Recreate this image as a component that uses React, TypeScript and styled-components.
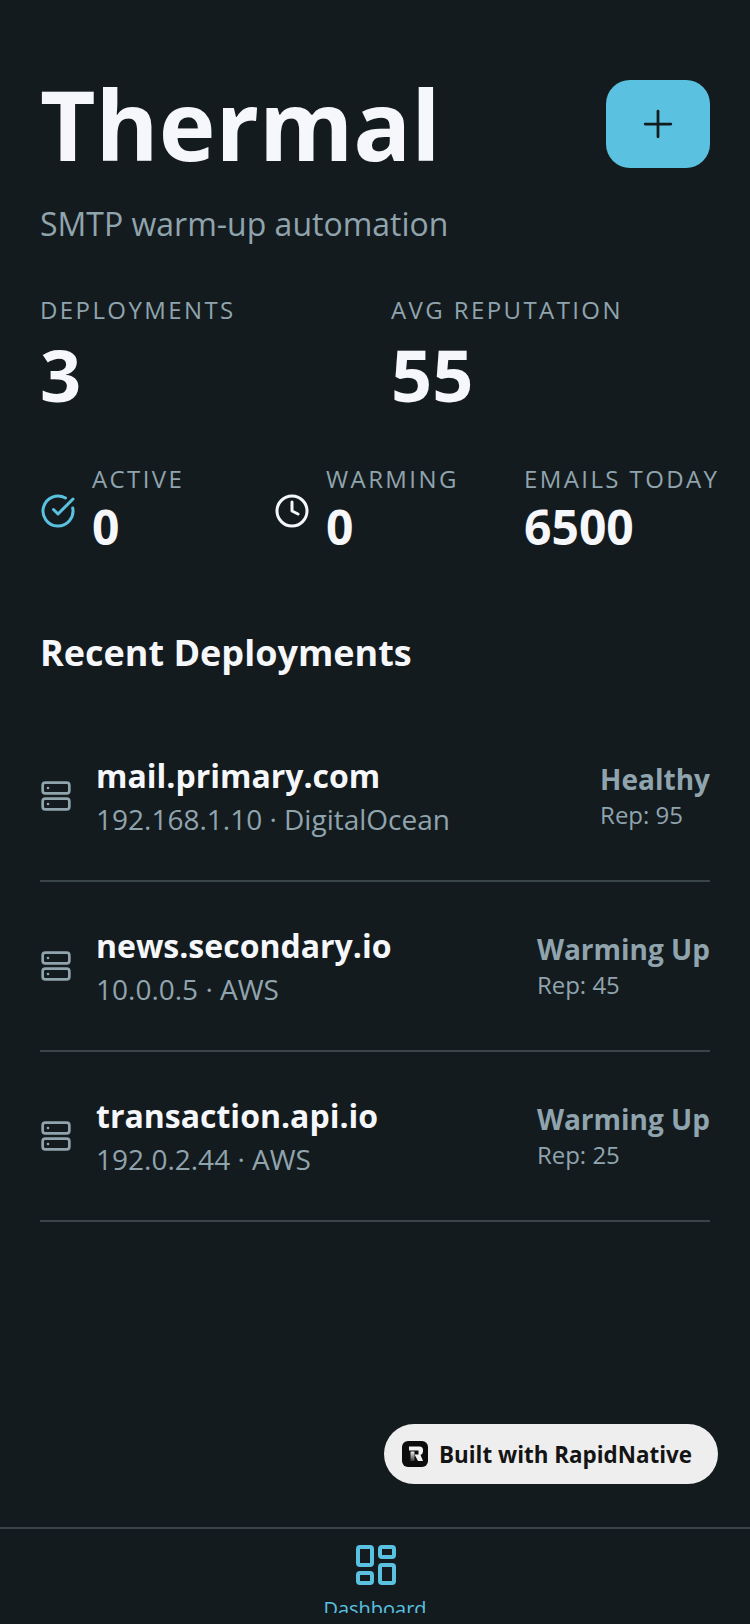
import styled, { createGlobalStyle } from 'styled-components';
import { Plus, CircleCheckBig, Clock, Server, LayoutDashboard } from 'lucide-react';

const GlobalStyle = createGlobalStyle`
  html, body {
    margin: 0;
    padding: 0;
    background: #141b1e;
  }
  * {
    box-sizing: border-box;
  }
`;

const Screen = styled.div`
  position: relative;
  width: 750px;
  height: 1624px;
  overflow: hidden;
  display: flex;
  flex-direction: column;
  background: #141b1e;
  font-family: 'Open Sans', 'Noto Sans', sans-serif;
`;

const Main = styled.main`
  flex: 1;
  padding: 80px 40px 0;
`;

const Header = styled.div`
  display: flex;
  justify-content: space-between;
  align-items: flex-start;
`;

const Title = styled.h1`
  margin: 0;
  font-size: 96px;
  line-height: 88px;
  font-weight: 700;
  color: #f5f7fa;
`;

const AddButton = styled.button`
  width: 104px;
  height: 88px;
  padding: 0;
  border: 0;
  border-radius: 24px;
  background: #5ac1e0;
  color: #141b1e;
  display: flex;
  align-items: center;
  justify-content: center;
`;

const Subtitle = styled.p`
  margin: 32px 0 0;
  font-size: 32px;
  line-height: 48px;
  color: #90a4ae;
`;

const StatsRow = styled.div`
  display: grid;
  grid-template-columns: 351px 1fr;
  margin-top: 46px;
`;

const Label = styled.div`
  font-size: 24px;
  line-height: 32px;
  letter-spacing: 2.4px;
  color: #90a4ae;
  white-space: nowrap;
`;

const BigValue = styled.div`
  margin-top: 8px;
  font-size: 72px;
  line-height: 80px;
  font-weight: 700;
  color: #f5f7fa;
`;

const MiniRow = styled.div`
  display: flex;
  margin-top: 49px;
`;

const MiniStat = styled.div<{ $width: number }>`
  flex: none;
  width: ${(p) => p.$width}px;
  display: flex;
  align-items: center;
  gap: 16px;
`;

const IconSlot = styled.div<{ $color: string }>`
  display: flex;
  margin-top: 3px;
  color: ${(p) => p.$color};
`;

const MiniValue = styled.div`
  margin-top: 4px;
  font-size: 48px;
  line-height: 56px;
  font-weight: 700;
  color: #f5f7fa;
`;

const SectionTitle = styled.h2`
  margin: 70px 0 31px;
  font-size: 36px;
  line-height: 56px;
  font-weight: 700;
  color: #f5f7fa;
`;

const Row = styled.div`
  display: flex;
  align-items: center;
  height: 170px;
  border-bottom: 2px solid #3a4549;
`;

const RowIcon = styled.div`
  width: 56px;
  display: flex;
  color: #90a4ae;
`;

const RowInfo = styled.div`
  flex: 1;
  margin-top: 3px;
`;

const RowName = styled.div`
  font-size: 32px;
  line-height: 40px;
  font-weight: 700;
  color: #f5f7fa;
`;

const RowMeta = styled.div`
  margin-top: 3px;
  font-size: 28px;
  line-height: 40px;
  color: #90a4ae;
`;

const StatusName = styled.div`
  font-size: 28px;
  line-height: 36px;
  font-weight: 700;
  color: #90a4ae;
`;

const StatusRep = styled.div`
  margin-top: 2px;
  font-size: 24px;
  line-height: 32px;
  color: #90a4ae;
`;

const Chip = styled.div`
  position: absolute;
  left: 384px;
  top: 1424px;
  width: 334px;
  height: 60px;
  padding-left: 18px;
  border-radius: 30px;
  background: #eeeeee;
  display: flex;
  align-items: center;
  gap: 11px;
  font-size: 22.4px;
  font-weight: 700;
  color: #141414;
`;

const ChipLogo = styled.svg`
  width: 26px;
  height: 26px;
`;

const Nav = styled.nav`
  height: 97px;
  border-top: 2px solid #3a4549;
  padding-top: 12px;
  display: flex;
  flex-direction: column;
  align-items: center;
`;

const NavInner = styled.div`
  height: 72px;
  overflow: hidden;
  display: flex;
  flex-direction: column;
  align-items: center;
  color: #5ac1e0;
`;

const NavIcon = styled(LayoutDashboard)`
  flex: none;
  margin-left: 2px;
`;

const NavLabel = styled.div`
  flex: none;
  margin-top: 6px;
  font-size: 20px;
  line-height: 28px;
  color: #5ac1e0;
`;

const deployments = [
  { name: 'mail.primary.com', meta: '192.168.1.10 · DigitalOcean', status: 'Healthy', rep: 95 },
  { name: 'news.secondary.io', meta: '10.0.0.5 · AWS', status: 'Warming Up', rep: 45 },
  { name: 'transaction.api.io', meta: '192.0.2.44 · AWS', status: 'Warming Up', rep: 25 },
];

function App() {
  return (
    <Screen>
      <GlobalStyle />
      <Main>
        <Header>
          <Title>Thermal</Title>
          <AddButton>
            <Plus size={44} strokeWidth={1.5} />
          </AddButton>
        </Header>
        <Subtitle>SMTP warm-up automation</Subtitle>
        <StatsRow>
          <div>
            <Label>DEPLOYMENTS</Label>
            <BigValue>3</BigValue>
          </div>
          <div>
            <Label>AVG REPUTATION</Label>
            <BigValue>55</BigValue>
          </div>
        </StatsRow>
        <MiniRow>
          <MiniStat $width={234}>
            <IconSlot $color="#5ac1e0">
              <CircleCheckBig size={36} strokeWidth={2} />
            </IconSlot>
            <div>
              <Label>ACTIVE</Label>
              <MiniValue>0</MiniValue>
            </div>
          </MiniStat>
          <MiniStat $width={250}>
            <IconSlot $color="#f5f7fa">
              <Clock size={36} strokeWidth={2} />
            </IconSlot>
            <div>
              <Label>WARMING</Label>
              <MiniValue>0</MiniValue>
            </div>
          </MiniStat>
          <MiniStat $width={190}>
            <div>
              <Label>EMAILS TODAY</Label>
              <MiniValue>6500</MiniValue>
            </div>
          </MiniStat>
        </MiniRow>
        <SectionTitle>Recent Deployments</SectionTitle>
        {deployments.map((d) => (
          <Row key={d.name}>
            <RowIcon>
              <Server size={32} strokeWidth={2} />
            </RowIcon>
            <RowInfo>
              <RowName>{d.name}</RowName>
              <RowMeta>{d.meta}</RowMeta>
            </RowInfo>
            <div>
              <StatusName>{d.status}</StatusName>
              <StatusRep>Rep: {d.rep}</StatusRep>
            </div>
          </Row>
        ))}
      </Main>
      <Chip>
        <ChipLogo viewBox="0 0 26 26">
          <defs>
            <linearGradient id="stemFade" x1="0" y1="0" x2="0" y2="1">
              <stop offset="0" stopColor="#f2f2f2" />
              <stop offset="1" stopColor="#3a3a3a" />
            </linearGradient>
          </defs>
          <rect width="26" height="26" rx="6" fill="#0d0d0d" />
          <path d="M7 5.500h10.500a3.500 3.500 0 0 1 3.500 3.500v1.500a3.500 3.500 0 0 1-2.500 3.300L21 20h-5l-3.500-6.500H16.500v-4H7z" fill="#f2f2f2" />
          <path d="M8.500 10.500h4v9.500h-4z" fill="url(#stemFade)" />
        </ChipLogo>
        Built with RapidNative
      </Chip>
      <Nav>
        <NavInner>
          <NavIcon size={48} strokeWidth={2} />
          <NavLabel>Dashboard</NavLabel>
        </NavInner>
      </Nav>
    </Screen>
  );
}

export default App;
